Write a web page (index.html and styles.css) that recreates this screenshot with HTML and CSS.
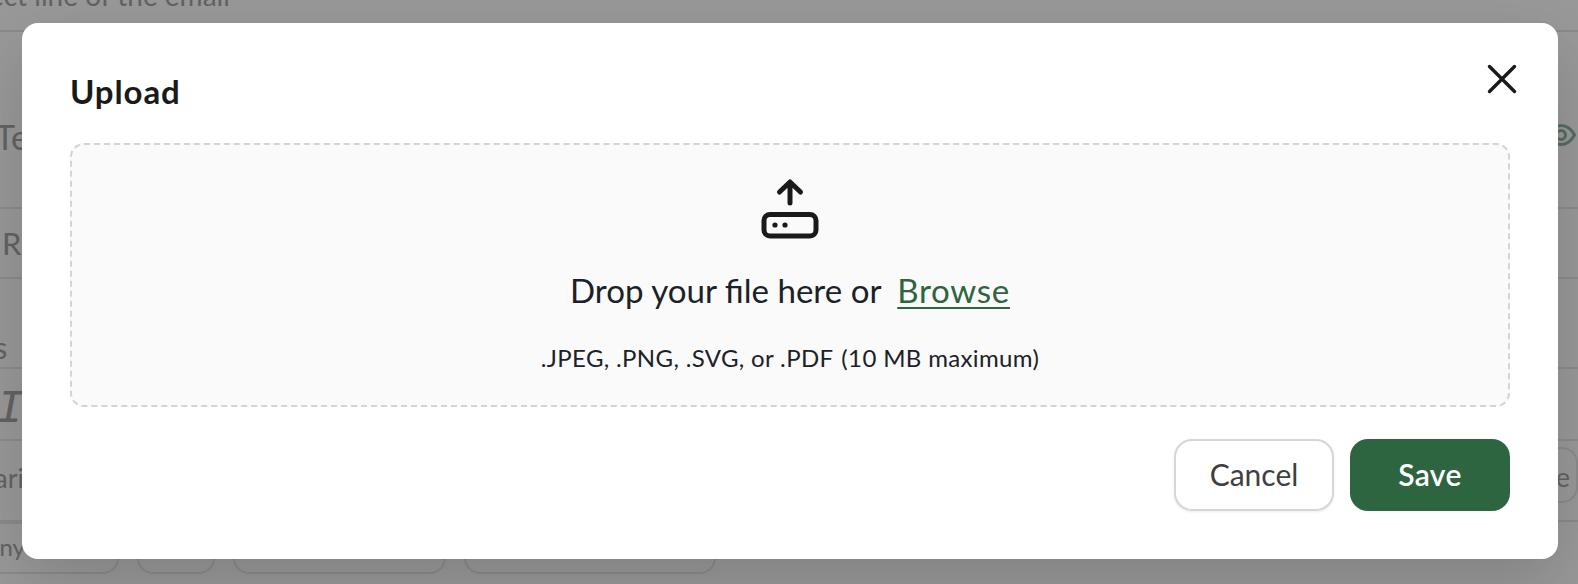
FILE: index.html
```html
<!DOCTYPE html>
<html lang="en">
<head>
    <meta charset="UTF-8">
    <title>Upload</title>
    <meta name="viewport" content="width=device-width, initial-scale=1.0">
    <link rel="stylesheet" href="styles.css">
</head>
<body>
    <!-- email form behind the dialog -->
    <div class="page">
        <div class="row row-subject"><span class="subject-text">Subject line of the email</span></div>
        <div class="row row-title">
            <span class="title-text">Template</span>
            <svg class="eye" viewBox="0 0 30 24" fill="none" stroke="#93b5a2" stroke-width="3">
                <path d="M1.5 12C5 5.5 10 2.5 15 2.5S25 5.5 28.5 12C25 18.5 20 21.5 15 21.5S5 18.5 1.5 12Z"/>
                <circle cx="15" cy="12" r="4.5"/>
            </svg>
        </div>
        <div class="row row-reply"><span class="reply-text">Reply</span></div>
        <div class="row row-label"><span class="label-text">Details</span></div>
        <div class="row row-toolbar"><span class="italic-btn">I</span></div>
        <div class="row row-vars">
            <span class="vars-text">Variables</span>
            <span class="chip-right">Name e</span>
        </div>
        <div class="row row-chips">
            <span class="chip chip-company">Company</span>
            <span class="chip chip-b"></span>
            <span class="chip chip-c"></span>
            <span class="chip chip-d"></span>
        </div>
    </div>

    <div class="overlay">
        <div class="modal">
            <button class="close-btn" aria-label="Close">
                <svg viewBox="0 0 32 32" fill="none" stroke="#1a1a1a" stroke-width="3.4" stroke-linecap="round">
                    <path d="M3.5 3.5L28.500 28.500M28.500 3.5L3.500 28.500"/>
                </svg>
            </button>
            <h2 class="modal-title">Upload</h2>
            <div class="dropzone">
                <svg class="upload-icon" viewBox="0 0 64 64" fill="none" stroke="#1a1a1a" stroke-width="5" stroke-linecap="round" stroke-linejoin="round">
                    <path d="M32 27V6.500M21.500 16L32 6L42.500 16"/>
                    <rect x="6" y="38.500" width="52" height="21.500" rx="6"/>
                    <circle cx="17" cy="49" r="2.600" fill="#1a1a1a" stroke="none"/>
                    <circle cx="27" cy="49" r="2.600" fill="#1a1a1a" stroke="none"/>
                </svg>
                <p class="drop-text">Drop your file here or <a href="#" class="browse-link">Browse</a></p>
                <p class="drop-hint">.JPEG, .PNG, .SVG, or .PDF <span class="hint-size">(10 MB maximum)</span></p>
            </div>
            <div class="modal-footer">
                <button class="btn btn-cancel">Cancel</button>
                <button class="btn btn-save">Save</button>
            </div>
        </div>
    </div>
</body>
</html>
```

FILE: styles.css
```css
body {
    font-family: Lato, "Open Sans", sans-serif;
    margin: 0;
    height: 584px;
    overflow: hidden;
    background: #fff;
    position: relative;
}

/* background page */
.page {
    color: #a6a6a6;
}
.row {
    display: flex;
    align-items: center;
    justify-content: space-between;
    border-bottom: 2px solid #e8e8e8;
    box-sizing: border-box;
    overflow: hidden;
}
.row-subject {
    height: 32px;
    align-items: flex-start;
}
.subject-text {
    font-size: 28px;
    line-height: 32px;
    margin: -21px 0 0 -64px;
    white-space: nowrap;
}
.row-title {
    height: 177px;
    align-items: flex-start;
    padding-right: 2px;
}
.title-text {
    font-size: 34px;
    line-height: 40px;
    margin: 85px 0 0 -5px;
}
.eye {
    width: 30px;
    height: 24px;
    margin-top: 91px;
}
.row-reply {
    height: 70px;
}
.reply-text {
    font-size: 31px;
    letter-spacing: 3px;
    margin-left: 2px;
}
.row-label {
    height: 90px;
    align-items: flex-end;
    padding-bottom: 2px;
}
.label-text {
    font-size: 30px;
    margin-left: -84px;
}
.row-toolbar {
    height: 72px;
    padding-top: 12px;
}
.italic-btn {
    font-family: "Liberation Mono", monospace;
    font-style: italic;
    font-size: 46px;
    margin-left: -4px;
}
.row-vars {
    height: 81px;
    padding-bottom: 6px;
    overflow: visible;
}
.vars-text {
    font-size: 27px;
    margin-left: -22px;
}
.chip-right {
    font-size: 27px;
    height: 56px;
    line-height: 56px;
    box-sizing: border-box;
    border: 2px solid #e8e8e8;
    border-radius: 16px;
    margin-top: -6px;
    padding: 0 6px 0 24px;
    white-space: nowrap;
}
.row-chips {
    height: 53px;
    border-bottom: 0;
    justify-content: flex-start;
    gap: 18px;
    overflow: visible;
    align-items: flex-start;
}
.chip {
    display: block;
    height: 52px;
    box-sizing: border-box;
    border: 2px solid #e8e8e8;
    border-radius: 16px;
    font-size: 24px;
    flex: none;
}
.chip-company {
    width: 180px;
    margin-left: -61px;
    padding: 8px 0 0 0;
    text-align: left;
    text-indent: -16px;
}
.chip-b {
    width: 78px;
}
.chip-c {
    width: 213px;
}
.chip-d {
    width: 252px;
}

/* dialog */
.overlay {
    position: absolute;
    top: 0;
    left: 0;
    width: 1578px;
    height: 584px;
    background: rgba(0, 0, 0, 0.4);
}
.modal {
    position: relative;
    box-sizing: border-box;
    width: 1536px;
    height: 536px;
    margin: 23px 0 0 22px;
    padding: 48px 48px 48px 48px;
    background: #fff;
    border-radius: 16px;
    box-shadow: 0 24px 70px rgba(0, 0, 0, 0.16);
}
.close-btn {
    position: absolute;
    top: 40px;
    right: 40px;
    width: 32px;
    height: 32px;
    padding: 0;
    border: 0;
    background: none;
}
.close-btn svg {
    display: block;
    width: 32px;
    height: 32px;
}
.modal-title {
    margin: 0;
    font-size: 33px;
    line-height: 40px;
    font-weight: 700;
    letter-spacing: 0.9px;
    color: #1a1a1a;
}
.dropzone {
    box-sizing: border-box;
    height: 264px;
    margin-top: 32px;
    padding-top: 31px;
    background: #fafafa;
    border: 2px dashed #d4d4d4;
    border-radius: 14px;
    text-align: center;
    color: #1b2129;
}
.upload-icon {
    display: block;
    width: 64px;
    height: 64px;
    margin: 0 auto;
}
.drop-text {
    margin: 30px 0 0;
    font-size: 33.1px;
    line-height: 40px;
}
.browse-link {
    margin-left: 8px;
    letter-spacing: 0.7px;
    color: #2d6541;
    text-decoration-thickness: 2px;
    text-underline-offset: 4px;
}
.drop-hint {
    margin: 33px 0 0;
    font-size: 24px;
    line-height: 30px;
    letter-spacing: 0.35px;
}
.hint-size {
    margin-left: 2px;
}
.modal-footer {
    display: flex;
    justify-content: flex-end;
    gap: 16px;
    margin-top: 32px;
}
.btn {
    box-sizing: border-box;
    width: 160px;
    height: 72px;
    padding: 0 0 3px;
    border-radius: 18px;
    font-family: inherit;
    font-size: 30px;
}
.btn-cancel {
    background: #fff;
    border: 2px solid #d6d6d6;
    color: #3f3f3f;
    box-shadow: 0 1px 3px rgba(0, 0, 0, 0.08);
}
.btn-save {
    background: #2d6541;
    border: 0;
    color: #fff;
    font-weight: 600;
    letter-spacing: 0.4px;
}
```
